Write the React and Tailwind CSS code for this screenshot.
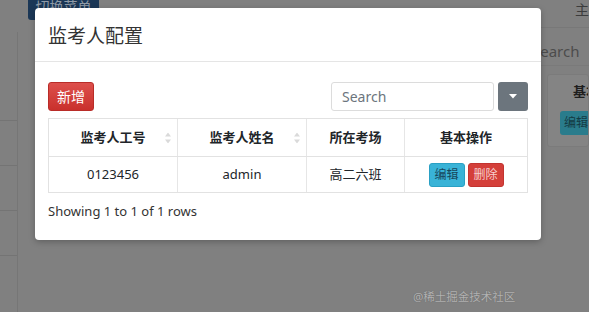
import React from "react";

function SortIcon() {
  return (
    <svg width="6" height="11" viewBox="0 0 6 11" className="absolute right-[6px] top-1/2 -translate-y-1/2">
      <path d="M3 0 L6 4 L0 4 Z" fill="#dadada" />
      <path d="M3 11 L6 7 L0 7 Z" fill="#dadada" />
    </svg>
  );
}

export default function App() {
  const font = "font-['Noto_Sans','Noto_Sans_CJK_SC',sans-serif]";
  return (
    <div className={`relative w-[589px] h-[312px] overflow-hidden bg-[#808080] ${font}`}>
      {/* background page (dimmed by overlay) */}
      <div className="flex h-full">
        <aside className="w-[18px] h-full flex flex-col">
          <div className="h-[32px]" />
          <div className="flex-1 border-r border-[#767676] flex flex-col pt-[88px]">
            {[0, 1, 2, 3].map((i) => (
              <div key={i} className="h-[45px] border-t border-[#747474]" />
            ))}
          </div>
        </aside>
        <main className="flex-1 flex">
          <div className="flex-1">
            <button className="ml-[10px] h-[22px] w-[71px] rounded-b-[3px] bg-[#1b3756] text-[14px] leading-[18px] text-[#8f9aa6] flex items-start justify-center -mt-[2px] overflow-hidden">
              切换菜单
            </button>
          </div>
          <div className="w-[59px] flex flex-col">
            <div className="h-[28px] border-b border-[#787878] pl-[45px] text-[14px] leading-[20px] text-[#3c3c3c] whitespace-nowrap">主</div>
            <div className="h-[38px] border-b border-[#7a7a7a] flex items-center pt-[10px] pl-[2px] text-[15px] text-[#4c4c4c]">Search</div>
            <div className="ml-[17px] mt-[8px] h-[73px] bg-[#848484] border border-[#7b7b7b] rounded-[3px] overflow-hidden">
              <div className="pl-[25px] pt-[7px] text-[13px] font-bold text-[#1e1e1e] leading-[18px] whitespace-nowrap">基本操作</div>
              <div className="ml-[12px] mt-[11px] h-[24px] w-[40px] rounded-[3px] bg-[#2a7c8c] text-[12px] leading-[24px] pl-[4px] text-[#143a43] whitespace-nowrap">编辑</div>
            </div>
          </div>
        </main>
      </div>

      {/* watermark */}
      <div className="absolute left-[413px] top-[289px] text-[11.5px] leading-[16px] text-[#b2b2b2] [text-shadow:0_0_1px_#5e5e5e]">
        @稀土掘金技术社区
      </div>

      {/* modal */}
      <div className="absolute left-[35px] top-[8px] w-[506px] h-[232px] bg-white rounded-[4px] shadow-[0_2px_6px_rgba(0,0,0,0.25)]">
        <div className="h-[54px] px-[13px] pt-[3px] flex items-center border-b border-[#e5e5e5]">
          <h4 className="text-[19px] text-[#333333] leading-[28px]">监考人配置</h4>
        </div>
        <div className="px-[13px] pt-[20px]">
          <div className="flex justify-between h-[29px]">
            <button className="w-[46px] h-[29px] rounded-[3px] bg-gradient-to-b from-[#dd4f4b] to-[#c9302c] border border-[#b92c28] text-white text-[14px] leading-[20px]">
              新增
            </button>
            <div className="flex gap-[4px]">
              <div className="w-[163px] h-[29px] border border-[#dcdcdc] rounded-[3px] flex items-center pl-[10px] text-[14px] text-[#6c757d]">
                Search
              </div>
              <button className="w-[30px] h-[29px] rounded-[3px] bg-[#6c757d] flex items-center justify-center">
                <svg width="8" height="5" viewBox="0 0 8 5">
                  <path d="M0 0 L8 0 L4 4.5 Z" fill="#ffffff" />
                </svg>
              </button>
            </div>
          </div>
          <div className="mt-[7px] border border-[#e2e2e2] text-[13px] text-[#212529]">
            <div className="grid grid-cols-[129px_129px_98px_1fr] h-[38px] border-b border-[#e2e2e2] font-bold">
              <div className="relative flex items-center justify-center border-r border-[#e6e6e6]">监考人工号<SortIcon /></div>
              <div className="relative flex items-center justify-center border-r border-[#e6e6e6]">监考人姓名<SortIcon /></div>
              <div className="flex items-center justify-center border-r border-[#e6e6e6]">所在考场</div>
              <div className="flex items-center justify-center">基本操作</div>
            </div>
            <div className="grid grid-cols-[129px_129px_98px_1fr] h-[35px]">
              <div className="flex items-center justify-center border-r border-[#e6e6e6]">0123456</div>
              <div className="flex items-center justify-center border-r border-[#e6e6e6]">admin</div>
              <div className="flex items-center justify-center border-r border-[#e6e6e6]">高二六班</div>
              <div className="flex items-center justify-center gap-[3px]">
                <span className="w-[36px] h-[24px] rounded-[3px] bg-[#39b3d7] border border-[#2aa0c4] text-[12px] leading-[22px] text-center text-[#17475c]">编辑</span>
                <span className="w-[36px] h-[24px] rounded-[3px] bg-[#d43f3a] border border-[#c23430] text-[12px] leading-[22px] text-center text-[#f7d0cf]">删除</span>
              </div>
            </div>
          </div>
          <div className="mt-[9px] text-[13px] leading-[18px] text-[#333333]">Showing 1 to 1 of 1 rows</div>
        </div>
      </div>
    </div>
  );
}
